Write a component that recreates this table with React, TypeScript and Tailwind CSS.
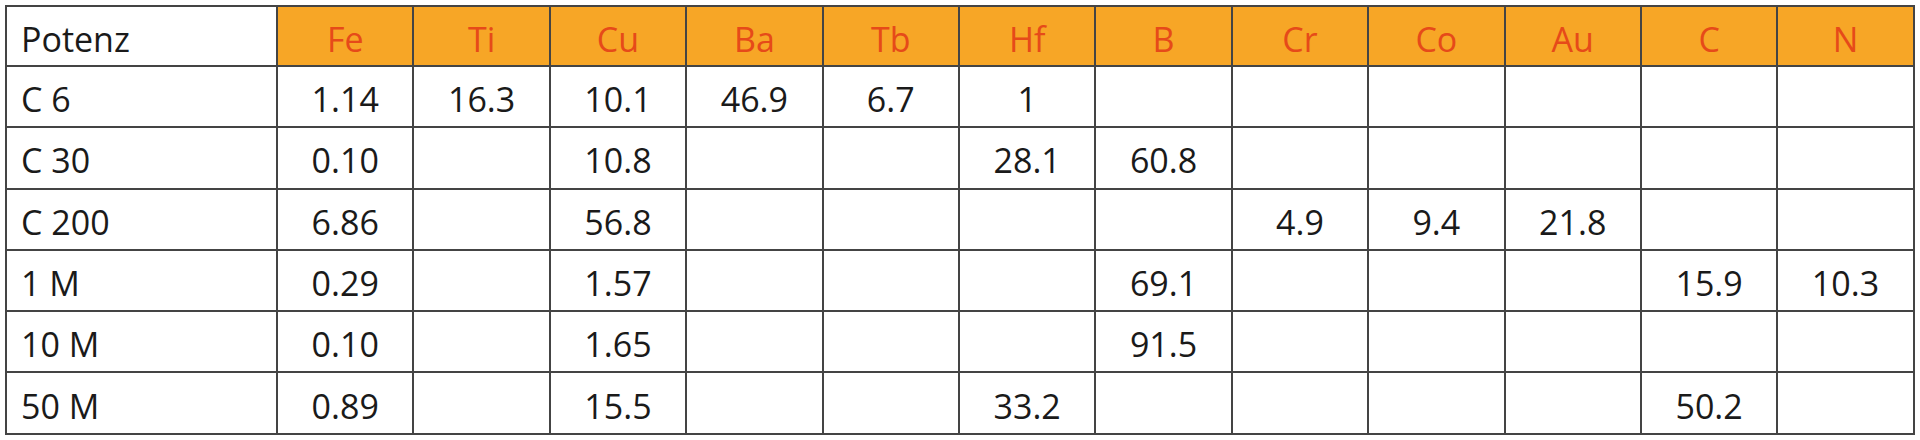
import React from "react";

const headers = ["Fe", "Ti", "Cu", "Ba", "Tb", "Hf", "B", "Cr", "Co", "Au", "C", "N"];
const rows: [string, string[]][] = [
  ["C 6", ["1.14", "16.3", "10.1", "46.9", "6.7", "1", "", "", "", "", "", ""]],
  ["C 30", ["0.10", "", "10.8", "", "", "28.1", "60.8", "", "", "", "", ""]],
  ["C 200", ["6.86", "", "56.8", "", "", "", "", "4.9", "9.4", "21.8", "", ""]],
  ["1 M", ["0.29", "", "1.57", "", "", "", "69.1", "", "", "", "15.9", "10.3"]],
  ["10 M", ["0.10", "", "1.65", "", "", "", "91.5", "", "", "", "", ""]],
  ["50 M", ["0.89", "", "15.5", "", "", "33.2", "", "", "", "", "50.2", ""]],
];

export default function App() {
  return (
    <div className="w-[1920px] h-[440px] bg-white pt-[5px] pl-[5px]" style={{ fontFamily: '"Open Sans", "Noto Sans", sans-serif' }}>
      <table className="border-collapse w-[1909px] table-fixed text-[34px] leading-none text-[#1a1a1a]">
        <colgroup>
          <col className="w-[271px]" />
          {headers.map((h) => (
            <col key={h} className="w-[136.4px]" />
          ))}
        </colgroup>
        <thead>
          <tr className="h-[60px]">
            <th className="border-2 border-[#444] bg-white text-left font-normal pl-[14px] pt-[5px]">Potenz</th>
            {headers.map((h) => (
              <th key={h} className="border-2 border-[#444] bg-[#F7A626] text-[#E64A19] font-normal text-center pt-[5px]">
                {h}
              </th>
            ))}
          </tr>
        </thead>
        <tbody>
          {rows.map(([label, vals]) => (
            <tr key={label} className="h-[61.3px]">
              <td className="border-2 border-[#444] text-left pl-[14px] pt-[5px]">{label}</td>
              {vals.map((v, i) => (
                <td key={i} className="border-2 border-[#444] text-center pt-[5px]">
                  {v}
                </td>
              ))}
            </tr>
          ))}
        </tbody>
      </table>
    </div>
  );
}
